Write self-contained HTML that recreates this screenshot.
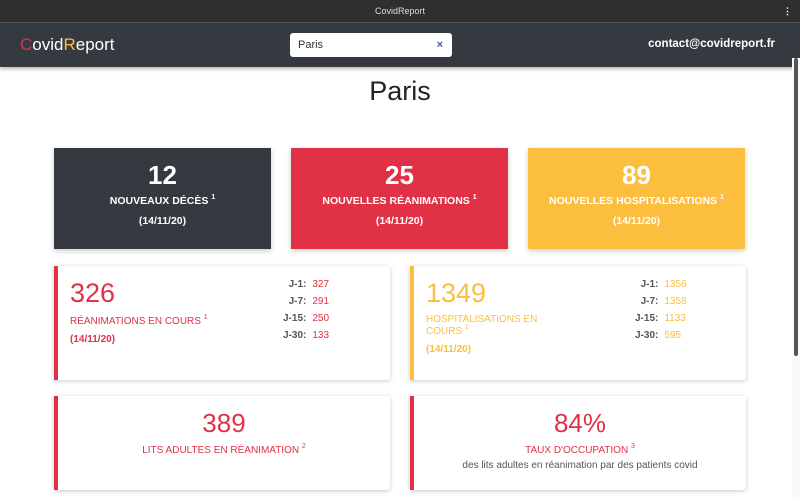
<!DOCTYPE html>
<html><head><meta charset="utf-8"><style>
*{margin:0;padding:0;box-sizing:border-box}
body{width:800px;height:500px;overflow:hidden;background:#fff;font-family:"Liberation Sans",sans-serif;position:relative;color:#343a40}
.a{position:absolute}
.tb{left:0;top:0;width:800px;height:23px;background:#2f2f2f;color:#ddd;font-size:9px;text-align:center;line-height:23px;border-bottom:1px solid #555}
.nav{left:0;top:23px;width:800px;height:44px;background:#353a40;box-shadow:0 2px 4px rgba(0,0,0,.3)}
.top{top:148px;height:101px;width:217px;color:#fff;text-align:center;box-shadow:0 2px 5px rgba(0,0,0,.2)}
.top .n{font-size:26px;font-weight:bold;margin-top:12px;line-height:30px}
.top .l{font-size:10.5px;font-weight:bold;margin-top:5px}
.top .d{font-size:10.5px;font-weight:bold;margin-top:8px}
sup{font-size:7px;vertical-align:5px;line-height:0}
.card{background:#fff;box-shadow:0 1px 5px rgba(0,0,0,.22);border-radius:0 3px 3px 0;border-left:4px solid #e03146}
.red{color:#e03146}.yel{color:#fcbe3e}
.tab{font-size:10px;line-height:17px}
.tab td{padding:0 3px}
.tab td:first-child{text-align:right;color:#555;font-weight:bold}
</style></head><body>
<div class="a tb">CovidReport<span style="position:absolute;right:8px;color:#fff;font-weight:bold">⋮</span></div>
<div class="a nav">
<div class="a" style="left:20px;top:12px;font-size:17px;color:#fff"><span style="color:#e03146">C</span>ovid<span style="color:#fcbe3e">R</span>eport</div>
<div class="a" style="left:290px;top:10px;width:162px;height:24px;background:#fff;border-radius:3px;font-size:11px;line-height:24px;padding-left:8px;color:#333">Paris<span style="position:absolute;right:9px;color:#3a5a9a;font-weight:bold">×</span></div>
<div class="a" style="right:25px;top:15px;font-size:11.5px;color:#fff;font-weight:bold">contact@covidreport.fr</div>
</div>
<div class="a" style="left:792px;top:58px;width:8px;height:442px;background:#fafafa"></div>
<div class="a" style="left:794px;top:58px;width:4px;height:298px;background:#555;border-radius:2px"></div>
<div class="a" style="left:0;width:800px;top:76px;text-align:center;font-size:27px;color:#222">Paris</div>

<div class="a top" style="left:54px;background:#343a40"><div class="n">12</div><div class="l">NOUVEAUX DÉCÈS <sup>1</sup></div><div class="d">(14/11/20)</div></div>
<div class="a top" style="left:291px;background:#e03146"><div class="n">25</div><div class="l">NOUVELLES RÉANIMATIONS <sup>1</sup></div><div class="d">(14/11/20)</div></div>
<div class="a top" style="left:528px;background:#fcbe3e"><div class="n">89</div><div class="l">NOUVELLES HOSPITALISATIONS <sup>1</sup></div><div class="d">(14/11/20)</div></div>

<div class="a card" style="left:54px;top:266px;width:336px;height:114px">
<div class="a red" style="left:12px;top:12px;font-size:27px">326</div>
<div class="a red" style="left:12px;top:50px;font-size:10px">RÉANIMATIONS EN COURS <sup>1</sup></div>
<div class="a red" style="left:12px;top:68px;font-size:10px;font-weight:bold">(14/11/20)</div>
<table class="a tab red" style="left:222px;top:10px;border-collapse:collapse"><tr><td>J-1:</td><td>327</td></tr><tr><td>J-7:</td><td>291</td></tr><tr><td>J-15:</td><td>250</td></tr><tr><td>J-30:</td><td>133</td></tr></table>
</div>
<div class="a card" style="left:410px;top:266px;width:336px;height:114px;border-left-color:#fcbe3e">
<div class="a yel" style="left:12px;top:12px;font-size:27px">1349</div>
<div class="a yel" style="left:12px;top:48px;font-size:10px;width:130px;line-height:12px">HOSPITALISATIONS EN COURS <sup>1</sup></div>
<div class="a yel" style="left:12px;top:78px;font-size:10px;font-weight:bold">(14/11/20)</div>
<table class="a tab yel" style="left:218px;top:10px;border-collapse:collapse"><tr><td>J-1:</td><td>1356</td></tr><tr><td>J-7:</td><td>1358</td></tr><tr><td>J-15:</td><td>1133</td></tr><tr><td>J-30:</td><td>595</td></tr></table>
</div>

<div class="a card" style="left:54px;top:396px;width:336px;height:94px;text-align:center">
<div class="red" style="font-size:26px;margin-top:12px">389</div>
<div class="red" style="font-size:10px;margin-top:6px">LITS ADULTES EN RÉANIMATION <sup>2</sup></div>
</div>
<div class="a card" style="left:410px;top:396px;width:336px;height:94px;text-align:center">
<div class="red" style="font-size:26px;margin-top:12px">84%</div>
<div class="red" style="font-size:10px;margin-top:6px">TAUX D'OCCUPATION <sup>3</sup></div>
<div style="font-size:10px;margin-top:4px;color:#555">des lits adultes en réanimation par des patients covid</div>
</div>
</body></html>
